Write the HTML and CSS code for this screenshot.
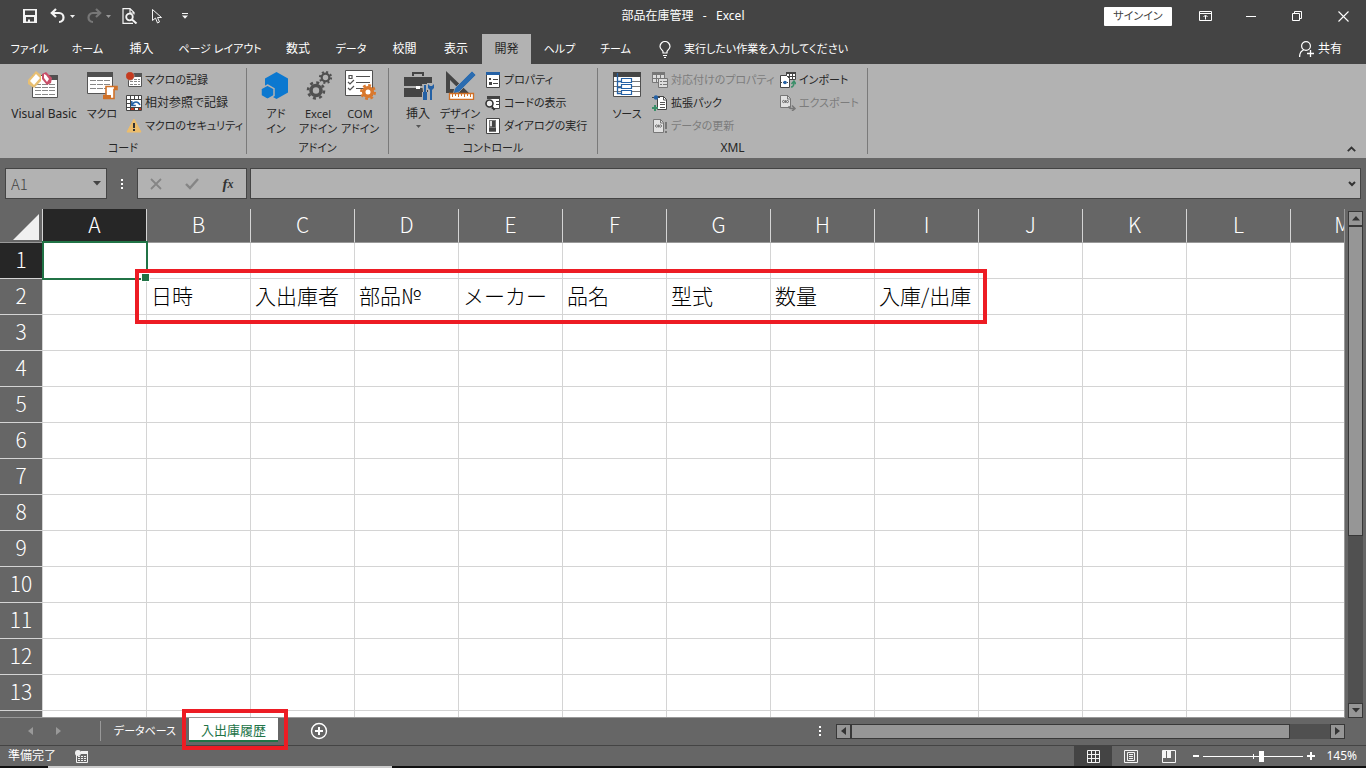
FILE: index.html
```html
<!DOCTYPE html>
<html lang="ja">
<head>
<meta charset="utf-8">
<title>部品在庫管理 - Excel</title>
<link rel="stylesheet" href="styles.css">
</head>
<body>
<header class="titlebar">
  <div class="quick">
    <button class="qbtn" aria-label="上書き保存"><svg width="14" height="14" viewBox="0 0 14 14"><path fill="#f4f4f4" fill-rule="evenodd" d="M0 0h14v14H0zM2 1.500v4.500h10v-4.500zM3 8v4.500h2v-2h2v2h4V8z"/></svg></button>
    <button class="qbtn" aria-label="元に戻す"><svg width="16" height="16" viewBox="0 0 16 16"><path d="M6 1 1.800 5 6 9M2 5h7c6 0 6 9 0 9" fill="none" stroke="#f4f4f4" stroke-width="2.200"/></svg><svg class="caret" width="5" height="3" viewBox="0 0 5 3"><path d="M0 0h5L2.500 3z" fill="#eee"/></svg></button>
    <button class="qbtn" aria-label="やり直し"><svg width="16" height="16" viewBox="0 0 16 16"><path d="M10 1 14.200 5 10 9M14 5H7c-6 0-6 9 0 9" fill="none" stroke="#777" stroke-width="2.200"/></svg><svg class="caret" width="5" height="3" viewBox="0 0 5 3"><path d="M0 0h5L2.500 3z" fill="#999"/></svg></button>
    <button class="qbtn" aria-label="印刷プレビュー"><svg width="16" height="16" viewBox="0 0 16 16"><path d="M11 15.400H1V.600h7l4 4v2M8 1v4h4" fill="none" stroke="#f4f4f4" stroke-width="1.200"/><circle cx="7.500" cy="9" r="3.300" fill="#444" stroke="#f4f4f4" stroke-width="1.800"/><path d="m10 11.500 4.500 4" stroke="#f4f4f4" stroke-width="2"/></svg></button>
    <button class="qbtn" aria-label="オブジェクトの選択"><svg width="12" height="16" viewBox="0 0 12 16"><path d="M1.500 1.500v11l3-2.500 2 5 2-1-2-4.500h4z" fill="none" stroke="#f4f4f4"/></svg></button>
    <button class="qbtn" aria-label="ツールバーのカスタマイズ"><svg width="6" height="6" viewBox="0 0 6 6"><path d="M0 0h6v1H0zM0 2.500h6L3 5.800z" fill="#f4f4f4"/></svg></button>
  </div>
  <h1 class="title">部品在庫管理&nbsp;&nbsp; -&nbsp;&nbsp; Excel</h1>
  <div class="window">
    <button class="signin kana">サインイン</button>
    <button class="wbtn" aria-label="リボンの表示オプション"><svg width="13" height="10" viewBox="0 0 13 10"><path d="M.5.5h12v9H.5zM.5 2.500h12M6.500 8.500V4.500M4.500 6l2-2 2 2" fill="none" stroke="#fff"/></svg></button>
    <button class="wbtn" aria-label="最小化"><svg width="10" height="1" viewBox="0 0 10 1"><path d="M0 0h10v1H0z" fill="#fff"/></svg></button>
    <button class="wbtn" aria-label="元に戻す(縮小)"><svg width="10" height="10" viewBox="0 0 10 10"><path d="M.5 2.500h7v7h-7zM2.500 2.500v-2h7v7h-2" fill="none" stroke="#fff"/></svg></button>
    <button class="wbtn" aria-label="閉じる"><svg width="11" height="11" viewBox="0 0 11 11"><path d="m.5.5 10 10M10.500.5l-10 10" stroke="#fff" stroke-width="1.100"/></svg></button>
  </div>
</header>

<nav class="menubar">
  <div class="tabs">
    <button class="kana">ファイル</button><button class="kana">ホーム</button><button>挿入</button><button class="kana">ページ レイアウト</button><button>数式</button><button class="kana">データ</button><button>校閲</button><button>表示</button><button class="active">開発</button><button class="kana">ヘルプ</button><button class="kana">チーム</button>
  </div>
  <button class="tellme kana"><svg width="12" height="17" viewBox="0 0 12 17"><path d="M4 12v-1.500C3.500 9 1 8 1 5.500a5 5 0 0 1 10 0C11 8 8.500 9 8 10.500V12zM4 14.500h4M5 16.500h2" fill="none" stroke="#fff" stroke-width="1.200"/></svg>実行したい作業を入力してください</button>
  <button class="share"><svg width="15" height="16" viewBox="0 0 15 16"><circle cx="7" cy="5" r="4.400" fill="none" stroke="#fff" stroke-width="1.200"/><path d="M.6 16c0-4 1.400-6 4-7M11.500 9v7M8 12.500h7" fill="none" stroke="#fff" stroke-width="1.300"/></svg>共有</button>
</nav>

<section class="ribbon">
  <div class="group g-code">
    <div class="tools">
      <button class="big"><svg width="32" height="30" viewBox="0 0 32 30"><path d="M4.500 5.500h25v22h-25z" fill="#fff" stroke="#555"/><path d="M22 5h8v5h-8z" fill="#505050"/><path d="M7 14.500h20M7 17.500h20M7 20.500h20M7 24.500h20" stroke="#888" stroke-dasharray="6 1"/><path d="m0 10 8-9 5 4v6l-7 7-6-4z" fill="#e8bf72"/><path d="m2 11 6-7 4 4-6 7z" fill="#fff"/><path d="m14 4 4-2 6 6-1 5-4 2-5-6z" fill="#c94f68"/><path d="m16 4 2 1 3 4-2 3-3-4z" fill="#fff"/></svg><span>Visual Basic</span></button>
      <button class="big"><svg width="32" height="30" viewBox="0 0 32 30"><path d="M1.500 2.500h25v21h-25z" fill="#fff" stroke="#555"/><path d="M1 2h26v5H1z" fill="#505050"/><path d="M4 10.500h20M4 14.500h20M4 18.500h20" stroke="#888" stroke-dasharray="6 1"/><path d="M20 16.500h11v3h-3v9H18v-3h2z" fill="#fff" stroke="#d07027" stroke-width="1.600"/><path d="M17 25h8v4h-8zM28 16h3v4h-3z" fill="#d07027"/></svg><span class="kana">マクロ</span></button>
      <div class="stack">
        <button class="small kana"><svg width="16" height="16" viewBox="0 0 16 16"><path d="M2.500 2.500h13v12h-13z" fill="#fff" stroke="#555"/><path d="M2 1h14v4H2z" fill="#555"/><path d="M4 7.500h10M4 9.500h10M4 12.500h10" stroke="#888" stroke-dasharray="3 1"/><circle cx="4" cy="4" r="4.300" fill="#c53a1e" stroke="#b2b2b2" stroke-width=".5"/></svg>マクロの記録</button>
        <button class="small"><svg width="16" height="16" viewBox="0 0 16 16"><path d="M.5.5h15v15H.5z" fill="#fff" stroke="#444"/><path d="M4.500 0v16M8.500 0v4M12.500 0v4M0 4.500h16M0 8.500h4M0 12.500h16M8.500 12v4M12.500 12v4" stroke="#444"/><path d="M5 5h10v7H5z" fill="#fff"/><path d="M5 13h3v2H5zM13 13h2v2h-2z" fill="#c53a1e"/><path d="M5.800 6v4.500h4M6 10c2-4 6-4 8 0" fill="none" stroke="#2461a5" stroke-width="1.500"/></svg>相対参照で記録</button>
        <button class="small kana"><svg width="16" height="16" viewBox="0 0 16 16"><path d="m8 1 7 13H1z" fill="#edbd6b" stroke="#edbd6b" stroke-linejoin="round"/><path d="M7 5h2v5H7zM7 11h2v2H7z" fill="#333"/></svg>マクロのセキュリティ</button>
      </div>
    </div>
    <div class="caption kana">コード</div>
  </div>
  <div class="group g-addin">
    <div class="tools">
      <button class="big"><svg width="32" height="30" viewBox="0 0 32 30"><path d="M16.500 2 28 8.500v14L16.500 29 5 22.500v-14z" fill="#0b78d0"/><path d="m7.500 15 6.500 3.600v7L7.500 29.500 1 25.600v-7z" fill="#0b78d0" stroke="#b2b2b2" stroke-width="1.500"/></svg><span class="kana">アド<br>イン</span></button>
      <button class="big"><svg width="32" height="30" viewBox="0 0 32 30"><g fill="none" stroke="#505050"><circle cx="14" cy="20.500" r="5" stroke-width="3.600"/><circle cx="14" cy="20.500" r="8" stroke-width="2.600" stroke-dasharray="3 3.283"/><circle cx="23.500" cy="7.500" r="3.800" stroke-width="2.200"/><circle cx="23.500" cy="7.500" r="5.500" stroke-width="2.200" stroke-dasharray="2 2.320"/></g></svg><span class="kana">Excel<br>アドイン</span></button>
      <button class="big"><svg width="32" height="30" viewBox="0 0 32 30"><path d="M1.500.5h27v25h-27z" fill="#fff" stroke="#505050"/><path d="M5 5.500h3v3H5zM12 6.500h14M4 12l2 2 4-4M12 12.500h14M4 18l2 2 4-4M12 18.500h8" fill="none" stroke="#505050" stroke-width="1.200"/><circle cx="24" cy="22" r="4.300" fill="none" stroke="#d9782d" stroke-width="3.600"/><circle cx="24" cy="22" r="6.800" fill="none" stroke="#d9782d" stroke-width="2.400" stroke-dasharray="2.800 2.541"/></svg><span class="kana">COM<br>アドイン</span></button>
    </div>
    <div class="caption kana">アドイン</div>
  </div>
  <div class="group g-control">
    <div class="tools">
      <button class="big"><svg width="32" height="30" viewBox="0 0 32 30"><path d="M11 6V3h10v3" fill="none" stroke="#454545" stroke-width="2"/><path d="M2 7h28v9H2zM2 18h28v9H2z" fill="#454545"/><path d="M14 16h4v3h-4z" fill="#fff"/><path d="M20 14h5v8h1v9h-6v-9h1zM25 13h7v7h-2v11h-4V20h-1z" fill="#b2b2b2"/><path d="M22 15h2v7h-2zM21 22h4v8h-4zM26 14v4l2 2v10h2V20l2-2v-4l-2 2h-2z" fill="#2461a5"/></svg><span>挿入</span><svg class="drop" width="5" height="3" viewBox="0 0 5 3"><path d="M0 0h5L2.500 3z" fill="#555"/></svg></button>
      <button class="big"><svg width="32" height="30" viewBox="0 0 32 30"><path fill="#454545" fill-rule="evenodd" d="m2 1 23 22H2zM6 10v9h9z"/><path d="m28 1 4 4-17 17-6 2 2-6z" fill="#2b6cb0" stroke="#b2b2b2" stroke-width=".7"/><path d="M5.500 23.500h24v6h-24z" fill="#fff" stroke="#d07027" stroke-width="1.300"/><path d="M8.500 24v3M11.500 24v2M14.500 24v3M17.500 24v2M20.500 24v3M23.500 24v2M26.500 24v3" stroke="#d07027"/></svg><span class="kana">デザイン<br>モード</span></button>
      <div class="stack">
        <button class="small kana"><svg width="16" height="16" viewBox="0 0 16 16"><path d="M1.500.5h13v15h-13z" fill="#fff" stroke="#444"/><path d="M1 0h14v3H1z" fill="#2461a5"/><path d="M4 6h2v2H4zM4 10h3v3H4z" fill="#444"/><path d="M8 7.500h5M8 11.500h5" stroke="#444"/></svg>プロパティ</button>
        <button class="small kana"><svg width="16" height="16" viewBox="0 0 16 16"><path d="M2.500 1.500h12v12h-8" fill="#fff" stroke="#444"/><path d="M2 1h13v3H2z" fill="#444"/><path d="M11 6.500h3M11 9.500h3" stroke="#444"/><circle cx="4.500" cy="8.500" r="3.500" fill="#eee" stroke="#333" stroke-width="1.600"/><path d="m6.500 11 3 4" stroke="#333" stroke-width="2"/></svg>コードの表示</button>
        <button class="small kana"><svg width="16" height="16" viewBox="0 0 16 16"><path d="M1.500.5h13v15h-13z" fill="#fff" stroke="#444"/><path d="M4 2h7v12H4z" fill="#777"/><path d="M5 3h5v5H5z" fill="#ddd"/><path d="M7 3h3v6H7zM4 10h7v3H4z" fill="#444"/></svg>ダイアログの実行</button>
      </div>
    </div>
    <div class="caption kana">コントロール</div>
  </div>
  <div class="group g-xml">
    <div class="tools">
      <button class="big"><svg width="32" height="30" viewBox="0 0 32 30"><path d="M2.500 2.500h27v24h-27z" fill="#fff" stroke="#505050"/><path d="M2 2h28v5H2z" fill="#454545"/><path d="M3 11.500h26M3 16.500h26M3 21.500h26" stroke="#777"/><path d="M6.500 3v20.500h4M6.500 11.500h4M6.500 17.500h4" fill="none" stroke="#2461a5" stroke-width="1.300"/><path d="M10.500 8.500h10v4h-10zM10.500 14.500h10v4h-10zM10.500 20.500h10v4h-10z" fill="#fff" stroke="#2461a5" stroke-width="1.200"/></svg><span class="kana">ソース</span></button>
      <div class="stack">
        <button class="small kana" disabled><svg width="16" height="16" viewBox="0 0 16 16"><path d="M.5.5h12v10H.5z" fill="#ddd" stroke="#777"/><path d="M0 0h13v3H0z" fill="#777"/><path d="M4.500 3v8M8.500 3v8M0 6.500h12" stroke="#777"/><path d="M6.500 6.500h9v9h-9z" fill="#ddd" stroke="#777"/><path d="M8 9h2v1H8zM8 12h2v1H8zM11 9h4v1h-4zM11 12h4v1h-4z" fill="#777"/></svg>対応付けのプロパティ</button>
        <button class="small kana"><svg width="16" height="16" viewBox="0 0 16 16"><path d="M5.500 1.500h6l3 3v10h-9z" fill="#fff" stroke="#444"/><path d="M11.500 1v4h3M8 7.500h5M8 9.500h5M8 12.500h5" fill="none" stroke="#555"/><path d="M0 2.500h9" stroke="#444" stroke-dasharray="2 1"/><circle cx="4" cy="2.500" r="2.200" fill="#2461a5"/><path d="M3 10v6M0 13h6" stroke="#3b8f69" stroke-width="2"/></svg>拡張パック</button>
        <button class="small kana" disabled><svg width="16" height="16" viewBox="0 0 16 16"><path d="M1.500 1.500h7l3 3v10h-10z" fill="#e2e2e2" stroke="#777"/><path d="M8.500 1v4h3M3 8l2-1.500M3 8l2 1.500M10 8 8 6.500M10 8 8 9.500" fill="none" stroke="#777"/><circle cx="6.500" cy="8" r="1.500" fill="#777"/><path d="M13 4h2v7h-2zM13 13h2v2h-2z" fill="#777"/></svg>データの更新</button>
      </div>
      <div class="stack">
        <button class="small kana"><svg width="16" height="16" viewBox="0 0 16 16"><path d="M6.500.5h9v7h-9z" fill="#fff" stroke="#444"/><path d="M6 0h10v2H6z" fill="#444"/><path d="M9.500 2v5M12.500 2v5M7 4.500h9" stroke="#444"/><path d="M.5 3.500h6l3 3v9h-9z" fill="#fff" stroke="#444"/><path d="M1 10.500h8" stroke="#444" stroke-dasharray="1 1"/><circle cx="5" cy="10.500" r="1.800" fill="#2461a5"/><path d="M11 15c3 0 3-3 3-5M11.500 12 14 9l2 3" fill="none" stroke="#3b8f69" stroke-width="1.500"/></svg>インポート</button>
        <button class="small kana" disabled><svg width="16" height="16" viewBox="0 0 16 16"><path d="M.5.5h7l3 3v9H.5z" fill="#e2e2e2" stroke="#777"/><path d="M7.500 0v4h3M2 6.500l2-1.500M2 6.500 4 8M9 6.500 7 5M9 6.500 7 8" fill="none" stroke="#777"/><circle cx="5.500" cy="6.500" r="1.500" fill="#777"/><path d="M9 11c0 3 2 2.500 6 2.500M12 10.500l3 3-3 2.500" fill="none" stroke="#777" stroke-width="1.500"/></svg>エクスポート</button>
      </div>
    </div>
    <div class="caption">XML</div>
  </div>
  <button class="collapse" aria-label="リボンを折りたたむ"><svg width="9" height="6" viewBox="0 0 9 6"><path d="m.8 5.200 3.700-3.700 3.700 3.700" fill="none" stroke="#333" stroke-width="1.800"/></svg></button>
</section>

<section class="formulabar">
  <div class="namebox"><input value="A1" aria-label="名前ボックス"><svg width="8" height="5" viewBox="0 0 8 5"><path d="M0 0h8L4 4.500z" fill="#444"/></svg></div>
  <svg class="grip" width="2" height="10" viewBox="0 0 2 10"><path d="M0 0h2v2H0zM0 4h2v2H0zM0 8h2v2H0z" fill="#fff"/></svg>
  <div class="fxbox">
    <button aria-label="キャンセル"><svg width="12" height="12" viewBox="0 0 12 12"><path d="m1 1 10 10M11 1 1 11" stroke="#858585" stroke-width="1.800"/></svg></button>
    <button aria-label="入力"><svg width="14" height="12" viewBox="0 0 14 12"><path d="m1 6 4 4 8-9" fill="none" stroke="#858585" stroke-width="2.400"/></svg></button>
    <button class="fx" aria-label="関数の挿入">f<span>x</span></button>
  </div>
  <div class="formula"><input aria-label="数式バー"><svg width="8" height="6" viewBox="0 0 8 6"><path d="m1 1 3 3 3-3" fill="none" stroke="#333" stroke-width="2"/></svg></div>
</section>

<main class="sheet">
  <div class="view">
    <table class="grid">
      <thead><tr><th class="corner"><svg width="26" height="26" viewBox="0 0 26 26"><path d="M26 0v26H0z" fill="#f0f0f0"/></svg></th><th class="on">A</th><th>B</th><th>C</th><th>D</th><th>E</th><th>F</th><th>G</th><th>H</th><th>I</th><th>J</th><th>K</th><th>L</th><th>M</th></tr></thead>
      <tbody>
        <tr><th class="on">1</th><td></td><td></td><td></td><td></td><td></td><td></td><td></td><td></td><td></td><td></td><td></td><td></td><td></td></tr>
        <tr><th>2</th><td></td><td>日時</td><td>入出庫者</td><td>部品№</td><td>メーカー</td><td>品名</td><td>型式</td><td>数量</td><td>入庫/出庫</td><td></td><td></td><td></td><td></td></tr>
        <tr><th>3</th><td></td><td></td><td></td><td></td><td></td><td></td><td></td><td></td><td></td><td></td><td></td><td></td><td></td></tr>
        <tr><th>4</th><td></td><td></td><td></td><td></td><td></td><td></td><td></td><td></td><td></td><td></td><td></td><td></td><td></td></tr>
        <tr><th>5</th><td></td><td></td><td></td><td></td><td></td><td></td><td></td><td></td><td></td><td></td><td></td><td></td><td></td></tr>
        <tr><th>6</th><td></td><td></td><td></td><td></td><td></td><td></td><td></td><td></td><td></td><td></td><td></td><td></td><td></td></tr>
        <tr><th>7</th><td></td><td></td><td></td><td></td><td></td><td></td><td></td><td></td><td></td><td></td><td></td><td></td><td></td></tr>
        <tr><th>8</th><td></td><td></td><td></td><td></td><td></td><td></td><td></td><td></td><td></td><td></td><td></td><td></td><td></td></tr>
        <tr><th>9</th><td></td><td></td><td></td><td></td><td></td><td></td><td></td><td></td><td></td><td></td><td></td><td></td><td></td></tr>
        <tr><th>10</th><td></td><td></td><td></td><td></td><td></td><td></td><td></td><td></td><td></td><td></td><td></td><td></td><td></td></tr>
        <tr><th>11</th><td></td><td></td><td></td><td></td><td></td><td></td><td></td><td></td><td></td><td></td><td></td><td></td><td></td></tr>
        <tr><th>12</th><td></td><td></td><td></td><td></td><td></td><td></td><td></td><td></td><td></td><td></td><td></td><td></td><td></td></tr>
        <tr><th>13</th><td></td><td></td><td></td><td></td><td></td><td></td><td></td><td></td><td></td><td></td><td></td><td></td><td></td></tr>
        <tr><th></th><td></td><td></td><td></td><td></td><td></td><td></td><td></td><td></td><td></td><td></td><td></td><td></td><td></td></tr>
      </tbody>
    </table>
    <div class="selection"></div>
    <div class="mark mark-cells"></div>
  </div>
  <div class="vscroll">
    <button aria-label="上へ"><svg width="8" height="5" viewBox="0 0 8 5"><path d="M0 4.500h8L4 0z" fill="#333"/></svg></button>
    <div class="thumb"></div><div class="rest"></div>
    <button aria-label="下へ"><svg width="8" height="5" viewBox="0 0 8 5"><path d="M0 0h8L4 4.500z" fill="#333"/></svg></button>
  </div>
</main>

<section class="sheetbar">
  <div class="sheetnav">
    <button aria-label="前のシート"><svg width="5" height="8" viewBox="0 0 5 8"><path d="M5 0v8L0 4z" fill="#999"/></svg></button>
    <button aria-label="次のシート"><svg width="5" height="8" viewBox="0 0 5 8"><path d="M0 0v8l5-4z" fill="#999"/></svg></button>
  </div>
  <button class="stab kana">データベース</button>
  <div class="current"><button class="stab active">入出庫履歴</button><div class="mark mark-tab"></div></div>
  <button class="add" aria-label="新しいシート"><svg width="18" height="18" viewBox="0 0 18 18"><circle cx="9" cy="9" r="7.500" fill="none" stroke="#fff" stroke-width="1.400"/><path d="M9 5v8M5 9h8" stroke="#fff" stroke-width="2"/></svg></button>
  <svg class="grip" width="2" height="10" viewBox="0 0 2 10"><path d="M0 0h2v2H0zM0 4h2v2H0zM0 8h2v2H0z" fill="#fff"/></svg>
  <div class="hscroll">
    <button aria-label="左へ"><svg width="5" height="8" viewBox="0 0 5 8"><path d="M5 0v8L0 4z" fill="#333"/></svg></button>
    <div class="thumb"></div><div class="rest"></div>
    <button aria-label="右へ"><svg width="5" height="8" viewBox="0 0 5 8"><path d="M0 0v8l5-4z" fill="#333"/></svg></button>
  </div>
</section>

<footer class="status">
  <span>準備完了</span>
  <button class="rec" aria-label="マクロの記録"><svg width="13" height="13" viewBox="0 0 13 13"><path d="M1.500 2.500h11v10h-11z" fill="none" stroke="#f0f0f0"/><path d="M6 1h7v3H6z" fill="#f0f0f0"/><path d="M3 6.500h8M3 8.500h8M3 10.500h8" stroke="#f0f0f0" stroke-dasharray="2 1"/><circle cx="3" cy="3" r="3" fill="#f0f0f0"/></svg></button>
  <div class="views">
    <button class="active" aria-label="標準"><svg width="13" height="13" viewBox="0 0 13 13"><path d="M.5.5h12v12H.5zM4.500 0v13M8.500 0v13M0 4.500h13M0 8.500h13" fill="none" stroke="#f4f4f4"/></svg></button>
    <button aria-label="ページ レイアウト"><svg width="14" height="13" viewBox="0 0 14 13"><path d="M.5.5h13v12H.5zM3.500 2.500h7v8h-7zM5 4.500h4M5 6.500h4M5 8.500h4" fill="none" stroke="#f4f4f4"/></svg></button>
    <button aria-label="改ページ プレビュー"><svg width="14" height="13" viewBox="0 0 14 13"><path d="M.5.5h13v12H.5z" fill="none" stroke="#f4f4f4"/><path d="M1 1h3v7H1zM5 1h4v7H5z" fill="#f4f4f4"/></svg></button>
  </div>
  <div class="zoom">
    <button aria-label="縮小"><svg width="6" height="2" viewBox="0 0 6 2"><path d="M0 0h6v2H0z" fill="#fff"/></svg></button>
    <input type="range" min="0" max="200" value="117" aria-label="ズーム">
    <button aria-label="拡大"><svg width="8" height="8" viewBox="0 0 8 8"><path d="M3 0h2v3h3v2H5v3H3V5H0V3h3z" fill="#fff"/></svg></button>
    <span class="pct">145%</span>
  </div>
</footer>
<div class="edge"></div>
</body>
</html>
```
FILE: styles.css
```css
* { box-sizing: border-box; }
body {
  margin: 0;
  height: 100vh;
  display: flex;
  flex-direction: column;
  overflow: hidden;
  background: #666;
  color: #fff;
  font: 12px/16px "Noto Sans", "Noto Sans CJK JP", sans-serif;
  font-feature-settings: "palt";
}
button, input {
  font: inherit;
  font-feature-settings: inherit;
  color: inherit;
  background: none;
  border: 0;
  padding: 0;
  margin: 0;
  white-space: nowrap;
}
svg { display: block; flex: none; }
.kana { font-size: 11px; }

.titlebar {
  flex: none;
  display: grid;
  grid-template-columns: 1fr auto 1fr;
  align-items: center;
  height: 32px;
  background: #444;
}
.quick { display: grid; grid-template-columns: 29px 37px 35px 27px 28px 28px; padding-left: 15px; }
.qbtn { display: flex; align-items: center; justify-content: center; gap: 4px; height: 32px; }
.title { margin: 0; font-size: 12px; font-weight: 400; }
.window { display: flex; justify-content: flex-end; align-items: center; }
.signin { width: 68px; height: 19px; margin-right: 10px; background: #fff; color: #444; border-radius: 1px; }
.wbtn { width: 46px; height: 32px; display: flex; align-items: center; justify-content: center; }

.menubar { flex: none; display: flex; align-items: stretch; height: 32px; padding-top: 2px; background: #444; }
.tabs { display: grid; grid-template-columns: 59px 57px 51px 106px 50px 56px 51px 52px 49px 57px 55px; }
.tabs .active { background: #b2b2b2; color: #262626; }
.tellme { display: flex; align-items: center; gap: 13px; margin-left: 16px; }
.share { display: flex; align-items: center; gap: 4px; margin: 0 24px 0 auto; }

.ribbon { flex: none; display: flex; height: 94px; padding: 4px 0; background: #b2b2b2; color: #262626; }
.group { display: flex; flex-direction: column; justify-content: space-between; border-right: 1px solid #7a7a7a; }
.g-code { width: 247px; }
.g-addin { width: 142px; }
.g-control { width: 209px; }
.g-xml { width: 270px; }
.tools { display: flex; padding-left: 8px; }
.g-code .tools { padding-left: 6px; }
.caption { text-align: center; line-height: 12px; }
.big { flex: none; width: 42px; display: flex; flex-direction: column; align-items: center; padding-top: 2px; line-height: 15px; }
.big span { margin-top: 6px; }
.big .drop { margin-top: 4px; }
.g-code .big { width: 40px; }
.g-code .big:first-child { width: 76px; }
.stack { display: flex; flex-direction: column; flex: none; margin-left: 4px; }
.g-xml .stack { width: 124px; }
.g-xml .stack:last-child { width: auto; }
.small { display: flex; align-items: center; gap: 3px; height: 23px; }
.small:disabled { color: #7c7c7c; }
.collapse { margin: auto 10px 0 auto; padding-bottom: 2px; }

.formulabar { flex: none; display: flex; align-items: center; padding: 10px 5px; height: 51px; }
.namebox, .fxbox, .formula { height: 31px; background: #b2b2b2; border: 1px solid #444; display: flex; align-items: center; }
.namebox { width: 102px; padding: 0 5px; }
.namebox input { width: 82px; flex: none; font-family: "Noto Sans CJK JP", sans-serif; font-size: 15px; font-weight: 300; color: #444; }
.formulabar .grip { margin: 0 14px; }
.fxbox { width: 110px; margin-right: 3px; justify-content: space-around; }
.fxbox button { display: flex; justify-content: center; width: 24px; }
.fxbox .fx { font: italic bold 15px/16px "Liberation Serif", serif; color: #333; }
.fx span { font-size: 12px; }
.formula { flex: 1; padding-right: 4px; }
.formula input { flex: 1; min-width: 0; color: #262626; }

.sheet { flex: 1; min-height: 0; display: flex; }
.view { flex: 1; min-width: 0; position: relative; overflow: hidden; border-bottom: 1px solid #999; border-right: 1px solid #999; }
.grid { width: 1395px; table-layout: fixed; border-collapse: separate; border-spacing: 0; font: 300 21px/24px "Noto Sans CJK JP", sans-serif; font-feature-settings: normal; }
.grid th, .grid td { padding: 0 0 4px; height: 36px; border-right: 1px solid #d4d4d4; border-bottom: 1px solid #d4d4d4; white-space: nowrap; }
.grid td { background: #fff; color: #000; padding-left: 4px; text-align: left; }
.grid th { font-weight: 300; background: #666; color: #fff; text-align: center; }
.grid thead th { height: 34px; border-bottom-color: #999; }
.grid .corner { width: 43px; padding: 3px 0 0 13px; }
.grid th.on { background: #262626; }
.selection { position: absolute; left: 42px; top: 32px; width: 106px; height: 39px; border: 2px solid #217346; }
.selection::after { content: ""; position: absolute; right: -4px; bottom: -4px; width: 7px; height: 7px; background: #217346; border: 1px solid #fff; }
.mark { position: absolute; border: 4px solid #ed1c24; pointer-events: none; }
.mark-cells { left: 135px; top: 60px; width: 852px; height: 55px; }

.vscroll { width: 21px; padding: 2px 3px 0; display: flex; flex-direction: column; }
.vscroll button, .hscroll button { flex: none; width: 15px; height: 15px; display: flex; align-items: center; justify-content: center; background: #969696; border: 1px solid #383838; }
.thumb { background: #969696; border: 1px solid #383838; }
.rest { background: #505050; }
.vscroll .thumb { flex: 309; }
.vscroll .rest { flex: 168; }

.sheetbar { flex: none; display: flex; align-items: center; height: 28px; padding-bottom: 1px; border-bottom: 1px solid #444; }
.sheetnav { display: flex; gap: 23px; width: 101px; height: 20px; padding-left: 28px; align-items: center; border-right: 1px solid #999; }
.stab { width: 88px; height: 25px; }
.current { position: relative; align-self: flex-start; }
.stab.active { display: block; width: 89px; height: 24px; padding-top: 2px; background: #fff; color: #217346; font-size: 13px; border-bottom: 2px solid #217346; }
.mark-tab { left: -7px; top: -9px; width: 106px; height: 41px; }
.add { margin-left: 32px; }
.sheetbar .grip { margin: 0 15px 0 auto; }
.hscroll { flex: 0 1 509px; display: flex; margin-right: 21px; }
.hscroll .thumb { flex: 439; }
.hscroll .rest { flex: 40; }

.status { flex: none; display: flex; align-items: center; height: 20px; padding: 0 9px 0 8px; }
.rec { margin-left: 19px; }
.views { display: flex; margin-left: auto; }
.views button { width: 38px; height: 20px; display: flex; align-items: center; justify-content: center; }
.views .active { background: #444; }
.zoom { display: flex; align-items: center; gap: 4px; margin-left: 5px; }
.zoom input {
  appearance: none;
  width: 100px;
  height: 11px;
  background: linear-gradient(#fff, #fff) 50% 50% / 1px 5px no-repeat, linear-gradient(#fff, #fff) 50% 50% / 100% 1px no-repeat;
}
.zoom input::-webkit-slider-thumb { appearance: none; width: 5px; height: 11px; background: #fff; }
.pct { margin-left: 7px; }
.edge { flex: none; height: 2px; background: linear-gradient(to right, #111 48px, #ccc 48px, #ccc 392px, #111 392px); }
```
